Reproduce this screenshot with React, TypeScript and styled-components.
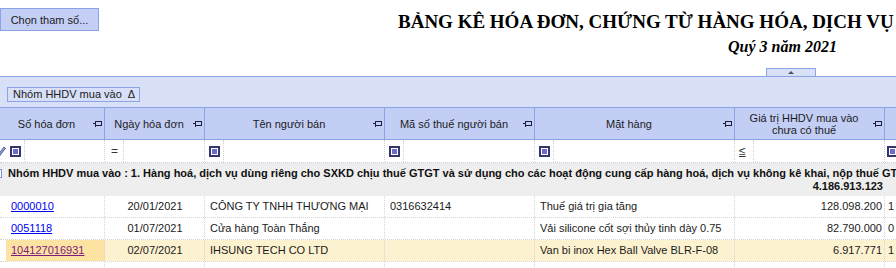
import React from "react";
import styled, { createGlobalStyle, css } from "styled-components";

const COLS = "6px 99px 100px 180px 150px 200px 150px 160px";
const UI = `"Liberation Sans", Arial, sans-serif`;

const Global = createGlobalStyle`
  html, body { margin: 0; padding: 0; background: #ffffff; overflow: hidden; }
  body { font-family: ${UI}; font-size: 11px; color: #1b1b1b; }
  #root { width: 896px; height: 268px; overflow: hidden; }
`;

const Page = styled.div`
  width: 896px;
  height: 268px;
  overflow: hidden;
  display: flex;
  flex-direction: column;
`;

const Top = styled.div`
  display: flex;
  height: 68px;
  flex-shrink: 0;
`;

const ParamButton = styled.button`
  margin-top: 8px;
  width: 99px;
  height: 23px;
  flex-shrink: 0;
  padding: 0;
  background: #c4cff6;
  border: 1px solid #8ea3e6;
  font-family: ${UI};
  font-size: 11px;
  color: #1a1a1a;
`;

const TitleBlock = styled.div`
  flex-shrink: 0;
  display: flex;
  flex-direction: column;
  font-family: "Liberation Serif", "Times New Roman", serif;
  font-weight: bold;
  color: #000;
`;

const Title = styled.div`
  margin: 10px 0 0 299px;
  font-size: 19px;
  line-height: 23px;
  white-space: nowrap;
`;

const Subtitle = styled.div`
  margin: 5px 0 0 629px;
  font-size: 16px;
  line-height: 18px;
  font-style: italic;
  white-space: nowrap;
`;

const CollapseRow = styled.div`
  display: flex;
  height: 8px;
  flex-shrink: 0;
`;

const CollapseTab = styled.div`
  margin-left: 766px;
  width: 48px;
  height: 7px;
  border: 1px solid #8ea3e6;
  border-bottom: none;
  background: #d8e0f8;
  display: flex;
  align-items: center;
  justify-content: center;
`;

const UpTriangle = styled.div`
  width: 0;
  height: 0;
  border-left: 3px solid transparent;
  border-right: 3px solid transparent;
  border-bottom: 3px solid #505060;
`;

const GroupPanel = styled.div`
  height: 30px;
  flex-shrink: 0;
  border-top: 1px solid #8ea3e6;
  background: #d8e0f8;
  display: flex;
  align-items: flex-start;
`;

const GroupChip = styled.div`
  margin: 10px 0 0 7px;
  height: 13px;
  padding: 0 4px 0 5px;
  border: 1px solid #8ea3e6;
  display: flex;
  align-items: center;
  gap: 6px;
  font-size: 11px;
  color: #1a1a1a;
  line-height: 13px;
`;

const Header = styled.div`
  display: grid;
  grid-template-columns: ${COLS};
  height: 31px;
  flex-shrink: 0;
  border-top: 1px solid #8ea3e6;
  border-bottom: 1px solid #8ea3e6;
  background: #c3cef5;
`;

const HeadCell = styled.div<{ $span?: number }>`
  ${(p) => p.$span && css`grid-column: span ${p.$span};`}
  display: flex;
  align-items: center;
  border-right: 1px solid #8ea3e6;
  color: #1c1c1c;
  overflow: hidden;
`;

const HeadLabel = styled.div`
  flex: 1;
  text-align: center;
  line-height: 12px;
  white-space: pre-line;
`;

const PinWrap = styled.span`
  display: flex;
  margin-right: 2px;
`;

const Pin = () => (
  <PinWrap>
    <svg width="9" height="7" viewBox="0 0 9 7">
      <path
        d="M0 3.5H2.5M2.5 0.5V6.5M2.5 1.5H8.5V5.5H2.5"
        stroke="#1d1d40"
        strokeWidth="1"
        fill="none"
        shapeRendering="crispEdges"
      />
    </svg>
  </PinWrap>
);

const FilterRow = styled.div`
  display: grid;
  grid-template-columns: ${COLS};
  height: 22px;
  flex-shrink: 0;
  border-bottom: 1px dotted #c8cde0;
  background: #ffffff;
`;

const FilterCell = styled.div`
  display: flex;
  align-items: stretch;
  border-right: 1px dotted #d0d0d0;
  overflow: hidden;
`;

const Indicator = styled.div`
  display: flex;
  align-items: center;
  overflow: hidden;
`;

const OpBox = styled.div<{ $pad?: number }>`
  width: 19px;
  flex-shrink: 0;
  box-sizing: border-box;
  padding-left: ${(p) => p.$pad ?? 4}px;
  border-right: 1px dotted #d0d0d0;
  display: flex;
  align-items: center;
  color: #333;
  font-size: 12px;
`;

const CheckIcon = styled.div`
  width: 11px;
  height: 11px;
  box-sizing: border-box;
  border: 2px solid #35356e;
  padding: 1px;
  background: #fff;
  &::after {
    content: "";
    display: block;
    width: 5px;
    height: 5px;
    background: #6a6ad2;
  }
`;

const OpText = styled.span<{ $under?: boolean }>`
  font-size: 12px;
  line-height: 12px;
  color: #333;
  ${(p) => p.$under && css`text-decoration: underline;`}
`;

const Gap = styled.div`
  height: 1px;
  flex-shrink: 0;
  background: #e6e8ec;
`;

const GroupRow = styled.div`
  height: 32px;
  flex-shrink: 0;
  background: #eeeeee;
  display: flex;
  flex-direction: column;
  font-weight: bold;
  color: #111;
`;

const GroupTitleLine = styled.div`
  display: flex;
  align-items: center;
  height: 14px;
  margin-top: 2px;
  white-space: nowrap;
`;

const Expander = styled.div`
  width: 9px;
  height: 9px;
  margin-left: -7px;
  flex-shrink: 0;
  box-sizing: border-box;
  border: 1px solid #7a8fd8;
  background: #fff;
`;

const GroupTitle = styled.span`
  margin-left: 6px;
`;

const GroupSummary = styled.div`
  display: grid;
  grid-template-columns: ${COLS};
  height: 13px;
  line-height: 13px;
`;

const SummaryValue = styled.div`
  grid-column: 7;
  text-align: right;
  padding-right: 2px;
`;

const Row = styled.div`
  display: grid;
  grid-template-columns: ${COLS};
  height: 21px;
  flex-shrink: 0;
  border-bottom: 1px dotted #d4d4d4;
  background: #ffffff;
`;

const Cell = styled.div<{ $align?: "left" | "center" | "right"; $bg?: string; $padLeft?: number }>`
  padding: 0 4px 0 ${(p) => p.$padLeft ?? 5}px;
  line-height: 20px;
  border-right: 1px dotted #d4d4d4;
  white-space: nowrap;
  overflow: hidden;
  text-align: ${(p) => p.$align || "left"};
  background: ${(p) => p.$bg || "transparent"};
  color: #1b1b1b;
  ${(p) => p.$align === "right" && css`padding-right: 2px;`}
`;

const RowIndicator = styled.div`
  background: #ffffff;
`;

const Link = styled.a<{ $visited?: boolean }>`
  color: ${(p) => (p.$visited ? "#7e1a7e" : "#0000ee")};
  text-decoration: underline;
  cursor: pointer;
`;

type Data = {
  no: string;
  date: string;
  seller: string;
  tax: string;
  item: string;
  value: string;
  extra: string;
};

const rows: Data[] = [
  { no: "0000010", date: "20/01/2021", seller: "CÔNG TY TNHH THƯƠNG MẠI", tax: "0316632414", item: "Thuế giá trị gia tăng", value: "128.098.200", extra: "1" },
  { no: "0051118", date: "01/07/2021", seller: "Cửa hàng Toàn Thắng", tax: "", item: "Vải silicone cốt sợi thủy tinh dày 0.75", value: "82.790.000", extra: "0" },
  { no: "104127016931", date: "02/07/2021", seller: "IHSUNG TECH CO LTD", tax: "", item: "Van bi inox Hex Ball Valve BLR-F-08", value: "6.917.771", extra: "1" },
  { no: "104127016934", date: "02/07/2021", seller: "IHSUNG TECH CO LTD", tax: "", item: "Van bi inox Hex Ball Valve BLR-F-10", value: "5.120.440", extra: "1" },
];

const SEL = 2;

export default function App() {
  return (
    <Page>
      <Global />
      <Top>
        <ParamButton>Chọn tham số...</ParamButton>
        <TitleBlock>
          <Title>BẢNG KÊ HÓA ĐƠN, CHỨNG TỪ HÀNG HÓA, DỊCH VỤ MUA VÀO</Title>
          <Subtitle>Quý 3 năm 2021</Subtitle>
        </TitleBlock>
      </Top>
      <CollapseRow>
        <CollapseTab>
          <UpTriangle />
        </CollapseTab>
      </CollapseRow>
      <GroupPanel>
        <GroupChip>
          <span>Nhóm HHDV mua vào</span>
          <span>Δ</span>
        </GroupChip>
      </GroupPanel>
      <Header>
        <HeadCell $span={2}>
          <HeadLabel>Số hóa đơn</HeadLabel>
          <Pin />
        </HeadCell>
        <HeadCell>
          <HeadLabel>Ngày hóa đơn</HeadLabel>
          <Pin />
        </HeadCell>
        <HeadCell>
          <HeadLabel>Tên người bán</HeadLabel>
          <Pin />
        </HeadCell>
        <HeadCell>
          <HeadLabel>Mã số thuế người bán</HeadLabel>
          <Pin />
        </HeadCell>
        <HeadCell>
          <HeadLabel>Mặt hàng</HeadLabel>
          <Pin />
        </HeadCell>
        <HeadCell>
          <HeadLabel>{"Giá trị HHDV mua vào\nchưa có thuế"}</HeadLabel>
          <Pin />
        </HeadCell>
        <HeadCell>
          <HeadLabel>Thuế suất</HeadLabel>
          <Pin />
        </HeadCell>
      </Header>
      <FilterRow>
        <Indicator>
          <svg width="6" height="12" viewBox="0 0 6 12">
            <path d="M-2 10L4 2L5.5 3.2L-0.5 11.2Z" fill="#8aa0e0" stroke="#3c4a80" strokeWidth="0.8" />
          </svg>
        </Indicator>
        <FilterCell>
          <OpBox><CheckIcon /></OpBox>
        </FilterCell>
        <FilterCell>
          <OpBox $pad={6}><OpText>=</OpText></OpBox>
        </FilterCell>
        <FilterCell>
          <OpBox><CheckIcon /></OpBox>
        </FilterCell>
        <FilterCell>
          <OpBox><CheckIcon /></OpBox>
        </FilterCell>
        <FilterCell>
          <OpBox><CheckIcon /></OpBox>
        </FilterCell>
        <FilterCell>
          <OpBox><OpText $under>≤</OpText></OpBox>
        </FilterCell>
        <FilterCell>
          <OpBox $pad={2}><CheckIcon /></OpBox>
        </FilterCell>
      </FilterRow>
      <Gap />
      <GroupRow>
        <GroupTitleLine>
          <Expander />
          <GroupTitle>
            Nhóm HHDV mua vào : 1. Hàng hoá, dịch vụ dùng riêng cho SXKD chịu thuế GTGT và sử dụng cho các hoạt động cung cấp hàng hoá, dịch vụ không kê khai, nộp thuế GTGT
          </GroupTitle>
        </GroupTitleLine>
        <GroupSummary>
          <SummaryValue>4.186.913.123</SummaryValue>
        </GroupSummary>
      </GroupRow>
      {rows.map((r, i) => {
        const sel = i === SEL;
        const rowBg = sel ? "#fdf2d0" : undefined;
        return (
          <Row key={r.no}>
            <RowIndicator />
            <Cell $bg={sel ? "#fde3a2" : undefined}>
              <Link $visited={i >= SEL}>{r.no}</Link>
            </Cell>
            <Cell $align="center" $bg={rowBg}>{r.date}</Cell>
            <Cell $bg={rowBg}>{r.seller}</Cell>
            <Cell $bg={rowBg}>{r.tax}</Cell>
            <Cell $bg={rowBg}>{r.item}</Cell>
            <Cell $align="right" $bg={rowBg}>{r.value}</Cell>
            <Cell $bg={rowBg} $padLeft={3}>{r.extra}</Cell>
          </Row>
        );
      })}
    </Page>
  );
}
